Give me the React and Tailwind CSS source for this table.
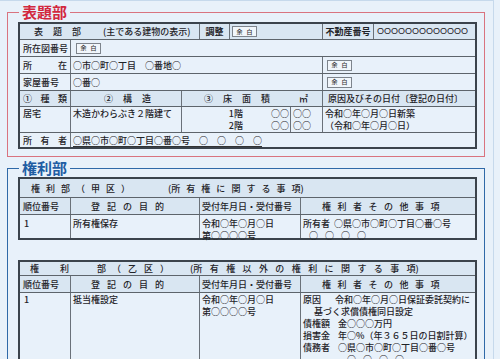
import React from "react";

function Yohaku() {
  return (
    <span className="inline-flex h-[11px] w-[25px] items-center justify-center gap-[4px] border border-[#7d848c] bg-[#f1f6fb] text-[6px] leading-none text-[#333]">
      <span>余</span>
      <span>白</span>
    </span>
  );
}

function Spread({ items, className }) {
  return (
    <div className={"flex " + className}>
      {items.map((t, i) => (
        <span key={i}>{t}</span>
      ))}
    </div>
  );
}

function ColHeader() {
  return (
    <div className="flex h-[17px] items-center border-t border-[#5d646b] bg-[#d9e6f2]">
      <div className="w-[50px] pl-[3px]">順位番号</div>
      <div className="flex h-full w-[129px] items-center border-l border-[#6a7179] pl-[20px]">
        <Spread items={["登", "記", "の", "目", "的"]} className="gap-[7px]" />
      </div>
      <div className="flex h-full w-[101px] items-center border-l border-[#6a7179] pl-[2px]">受付年月日・受付番号</div>
      <div className="flex h-full flex-1 items-center border-l border-[#6a7179] pl-[21px]">
        <Spread items={["権", "利", "者", "そ", "の", "他", "事", "項"]} className="gap-[6.5px]" />
      </div>
    </div>
  );
}

export default function App() {
  return (
    <div className="h-[359px] w-[500px] overflow-hidden bg-[#e8f1fa] font-['Noto_Sans_CJK_JP','Noto_Sans',sans-serif] text-[9px] font-medium leading-none text-[#1f2328]">
      <div className="h-[359px] w-[494px] border-r border-t border-[#c6d9ec] pt-[2px]">
        {/* 表題部 */}
        <fieldset className="ml-[7px] w-[478px] border border-[#d9737f] pb-[7px] pl-[10px] pr-[7px] pt-[1px]">
          <legend className="ml-[1px] px-[3px] text-[15px] font-bold leading-[18px] text-[#d2283e]">表題部</legend>
          <div className="border-2 border-[#3b434c]">
            {/* row 1 */}
            <div className="flex h-[15px] items-center bg-[#d9e6f2]">
              <div className="flex w-[179px] items-center pl-[14px]">
                <Spread items={["表", "題", "部"]} className="gap-[10px]" />
                <span className="ml-[22px]">(主である建物の表示)</span>
              </div>
              <div className="flex h-full w-[30px] items-center justify-center border-l border-[#6a7179] font-bold">調整</div>
              <div className="flex h-full w-[93px] items-center border-l border-[#6a7179] pl-[2px]">
                <Yohaku />
              </div>
              <div className="flex h-full w-[51px] items-center justify-center border-l border-[#6a7179] font-bold">不動産番号</div>
              <div className="flex h-full flex-1 items-center border-l border-[#6a7179] pl-[3px] font-['Liberation_Sans',sans-serif] text-[9px] font-normal">
                OOOOOOOOOOOOO
              </div>
            </div>
            {/* row 2 */}
            <div className="flex h-[17px] items-center border-t border-[#5d646b]">
              <div className="w-[50px] pl-[3px]">所在図番号</div>
              <div className="flex h-full flex-1 items-center border-l border-[#6a7179] pl-[5px]">
                <Yohaku />
              </div>
            </div>
            {/* row 3 */}
            <div className="flex h-[17px] items-center border-t border-[#5d646b]">
              <div className="flex w-[50px] justify-between px-[3px]">
                <span>所</span>
                <span>在</span>
              </div>
              <div className="flex h-full w-[252px] items-center border-l border-[#6a7179] pl-[2px]">○市○町○丁目　○番地○</div>
              <div className="flex h-full flex-1 items-center border-l border-[#6a7179] pl-[4px]">
                <Yohaku />
              </div>
            </div>
            {/* row 4 */}
            <div className="flex h-[17px] items-center border-t border-[#5d646b]">
              <div className="w-[50px] pl-[3px]">家屋番号</div>
              <div className="flex h-full w-[252px] items-center border-l border-[#6a7179] pl-[2px]">○番○</div>
              <div className="flex h-full flex-1 items-center border-l border-[#6a7179] pl-[4px]">
                <Yohaku />
              </div>
            </div>
            {/* row 5 */}
            <div className="flex h-[16px] items-center border-t border-[#5d646b] bg-[#d9e6f2]">
              <div className="flex w-[50px] justify-between px-[3px]">
                <span>①</span>
                <span>種</span>
                <span>類</span>
              </div>
              <div className="flex h-full w-[111px] items-center border-l border-[#6a7179] pl-[33px]">
                <Spread items={["②", "構", "造"]} className="gap-[10px]" />
              </div>
              <div className="flex h-full w-[141px] items-center border-l border-[#6a7179] pl-[22px]">
                <Spread items={["③", "床", "面", "積"]} className="gap-[10px]" />
                <span className="ml-[29px]">㎡</span>
              </div>
              <div className="flex h-full flex-1 items-center border-l border-[#6a7179] pl-[5px]">原因及びその日付〔登記の日付〕</div>
            </div>
            {/* row 6 */}
            <div className="flex h-[26px] border-t border-[#5d646b] leading-[12px]">
              <div className="w-[50px] pl-[3px] pt-[1px]">居宅</div>
              <div className="h-full w-[111px] border-l border-[#6a7179] pl-[2px] pt-[1px]">木造かわらぶき２階建て</div>
              <div className="flex h-full w-[109px] border-l border-[#6a7179] pt-[1px]">
                <div className="flex w-[61px] flex-col items-end">
                  <span>1階</span>
                  <span>2階</span>
                </div>
                <div className="ml-auto flex flex-col pr-[1px]">
                  <span>○○</span>
                  <span>○○</span>
                </div>
              </div>
              <div className="flex h-full w-[32px] flex-col border-l border-[#6a7179] pl-[2px] pt-[1px]">
                <span>○○</span>
                <span>○○</span>
              </div>
              <div className="flex h-full flex-1 flex-col border-l border-[#6a7179] pl-[2px] pt-[1px]">
                <span>令和○年○月○日新築</span>
                <span>（令和○年○月○日）</span>
              </div>
            </div>
            {/* row 7 */}
            <div className="flex h-[15px] items-center border-t border-[#5d646b]">
              <div className="flex w-[50px] justify-between px-[3px]">
                <span>所</span>
                <span>有</span>
                <span>者</span>
              </div>
              <div className="flex h-full flex-1 items-center border-l border-[#6a7179] pl-[2px]">
                <span className="underline decoration-[#333] underline-offset-[2px]">○県○市○町○丁目○番○号　○　○　○　○</span>
              </div>
            </div>
          </div>
        </fieldset>

        {/* 権利部 */}
        <fieldset className="ml-[7px] mt-[2px] w-[478px] border border-[#2f69a8] pb-[7px] pl-[10px] pr-[7px] pt-0">
          <legend className="ml-[1px] px-[3px] text-[15px] font-bold leading-[18px] text-[#1f5da3]">権利部</legend>
          {/* 甲区 */}
          <div className="border-2 border-[#3b434c]">
            <div className="flex h-[18px] items-center bg-[#d9e6f2] pl-[11px]">
              <Spread items={["権", "利", "部", "（", "甲", "区", "）"]} className="gap-[6px]" />
              <Spread
                items={["(所", "有", "権", "に", "関", "す", "る", "事", "項)"]}
                className="ml-[38px] gap-[6px]"
              />
            </div>
            <ColHeader />
            <div className="flex h-[24px] border-t border-[#5d646b] leading-[12px]">
              <div className="w-[50px] pl-[4px] pt-[3px]">1</div>
              <div className="h-full w-[129px] border-l border-[#6a7179] pl-[2px] pt-[3px]">所有権保存</div>
              <div className="flex h-full w-[101px] flex-col border-l border-[#6a7179] pl-[2px] pt-[3px]">
                <span>令和○年○月○日</span>
                <span>第○○○○号</span>
              </div>
              <div className="flex h-full flex-1 flex-col border-l border-[#6a7179] pl-[2px] pt-[3px]">
                <div className="flex">
                  <span>所有者</span>
                  <span className="ml-[4px]">○県○市○町○丁目○番○号</span>
                </div>
                <Spread items={["○", "○", "○", "○"]} className="gap-[7px] pl-[6px]" />
              </div>
            </div>
          </div>

          <div className="h-[20px]" />

          {/* 乙区 */}
          <div className="border-2 border-[#3b434c]">
            <div className="flex h-[13px] items-center bg-[#d9e6f2] pl-[10px]">
              <span>権</span>
              <span className="ml-[21px]">利</span>
              <span className="ml-[28px]">部</span>
              <Spread items={["（", "乙", "区", "）"]} className="ml-[6px] gap-[7px]" />
              <Spread
                items={["(所", "有", "権", "以", "外", "の", "権", "利", "に", "関", "す", "る", "事", "項)"]}
                className="ml-[21px] gap-[7.4px]"
              />
            </div>
            <ColHeader />
            <div className="flex h-[120px] border-t border-[#5d646b] leading-[12px]">
              <div className="w-[50px] pl-[4px] pt-[1px]">1</div>
              <div className="h-full w-[129px] border-l border-[#6a7179] pl-[2px] pt-[1px]">抵当権設定</div>
              <div className="flex h-full w-[101px] flex-col border-l border-[#6a7179] pl-[2px] pt-[1px]">
                <span>令和○年○月○日</span>
                <span>第○○○○号</span>
              </div>
              <div className="flex h-full flex-1 flex-col border-l border-[#6a7179] pl-[2px] pt-[1px]">
                <div className="flex">
                  <span>原因</span>
                  <span className="ml-[14px] whitespace-nowrap">令和○年○月○日保証委託契約に</span>
                </div>
                <div className="pl-[11px]">基づく求償債権同日設定</div>
                <div className="flex">
                  <span>債権額</span>
                  <span className="ml-[8px]">金○○○万円</span>
                </div>
                <div className="flex">
                  <span>損害金</span>
                  <span className="ml-[8px] whitespace-nowrap">年○%（年３６５日の日割計算）</span>
                </div>
                <div className="flex">
                  <span>債務者</span>
                  <span className="ml-[8px]">○県○市○町○丁目○番○号</span>
                </div>
                <Spread items={["○", "○", "○", "○"]} className="gap-[7px] pl-[44px]" />
              </div>
            </div>
          </div>
        </fieldset>
      </div>
    </div>
  );
}
